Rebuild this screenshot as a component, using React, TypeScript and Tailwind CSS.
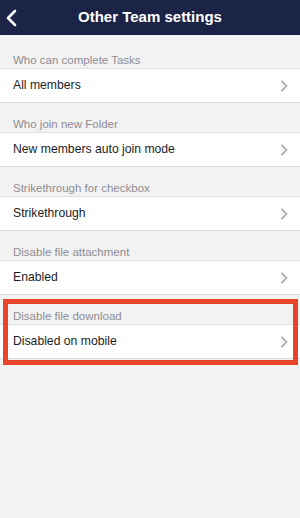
const sections = [
  { label: "Who can complete Tasks", value: "All members" },
  { label: "Who join new Folder", value: "New members auto join mode" },
  { label: "Strikethrough for checkbox", value: "Strikethrough" },
  { label: "Disable file attachment", value: "Enabled" },
  { label: "Disable file download", value: "Disabled on mobile", marked: true },
];

function Chevron() {
  return (
    <svg width="8" height="12" viewBox="0 0 8 12" fill="none">
      <path d="M2 1.5L6.5 6L2 10.5" stroke="#b2b2b7" strokeWidth="1.9" strokeLinecap="round" strokeLinejoin="round" />
    </svg>
  );
}

function Section({
  label,
  value,
  first,
  marked,
}: {
  label: string;
  value: string;
  first?: boolean;
  marked?: boolean;
}) {
  return (
    <div className="relative">
      <div
        className={`flex items-end px-[13px] pb-[1px] leading-[14px] text-[11.5px] text-[#8e8e93] ${
          first ? "h-[33px]" : "h-[29px]"
        }`}
      >
        {label}
      </div>
      <div className="h-[35px] bg-white border-y border-[#dedede] flex items-center justify-between pl-[13px] pr-[12px]">
        <span className="text-[12.2px] text-[#1c1c1e]">{value}</span>
        <Chevron />
      </div>
      {marked && (
        <div className="absolute left-[3px] right-[2px] top-[4px] bottom-[-6px] border-[5px] border-[#e8432b] pointer-events-none" />
      )}
    </div>
  );
}

export default function App() {
  return (
    <div
      className="w-[300px] h-[518px] bg-[#f2f2f2] overflow-hidden"
      style={{ fontFamily: "'Liberation Sans', Arial, sans-serif" }}
    >
      <div className="h-[35px] bg-[#1b2447] flex items-center relative">
        <button type="button" className="absolute left-[5px] text-white">
          <svg width="14" height="18" viewBox="0 0 14 18" fill="none">
            <path d="M10 2L3 9l7 7" stroke="white" strokeWidth="2.6" strokeLinecap="round" strokeLinejoin="round" />
          </svg>
        </button>
        <h1 className="flex-1 text-center text-white font-bold text-[15px]">Other Team settings</h1>
      </div>
      {sections.map((s, i) => (
        <Section key={s.label} label={s.label} value={s.value} first={i === 0} marked={s.marked} />
      ))}
    </div>
  );
}
